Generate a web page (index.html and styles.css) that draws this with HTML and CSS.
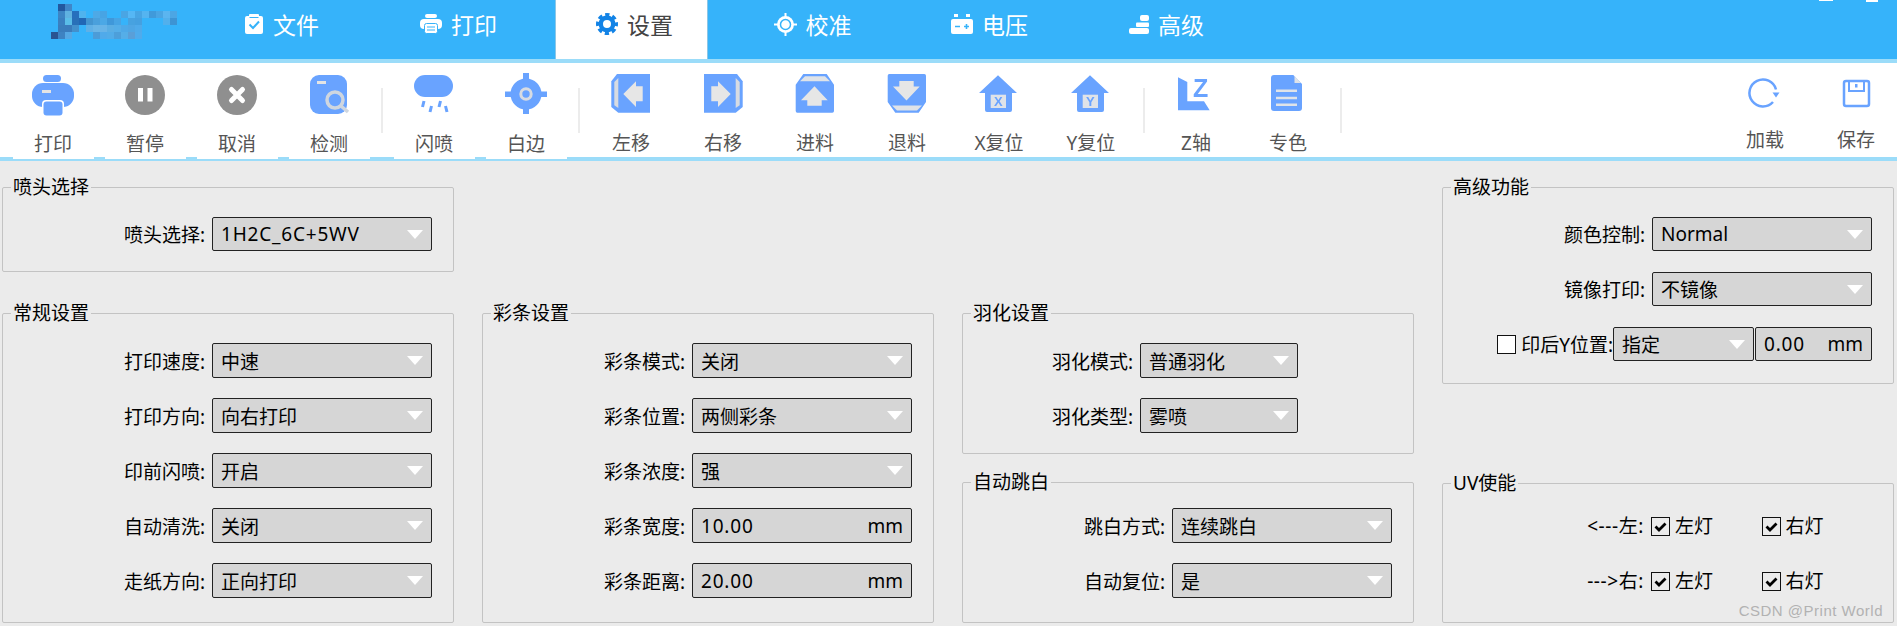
FILE: index.html
```html
<!DOCTYPE html>
<html lang="zh-CN">
<head>
<meta charset="UTF-8">
<title>打印设置</title>
<link rel="stylesheet" href="styles.css">
</head>
<body>
<div class="topbar">
    <svg class="logo" width="147" height="39" viewBox="0 0 147 39">
        <g transform="translate(0,4)">
            <rect x="7" y="0" width="7" height="7" fill="#22589f"/><rect x="14" y="0" width="7" height="7" fill="#3f86c8"/>
            <rect x="7" y="7" width="7" height="7" fill="#3c85c4"/><rect x="14" y="7" width="7" height="7" fill="#5fb2e0"/><rect x="21" y="7" width="7" height="7" fill="#2670bd"/><rect x="28" y="7" width="7" height="7" fill="#4fb3ee"/><rect x="42" y="7" width="7" height="7" fill="#4ea9e6"/><rect x="49" y="7" width="7" height="7" fill="#47a4e4"/><rect x="70" y="7" width="7" height="7" fill="#4aa5e3"/><rect x="77" y="7" width="7" height="7" fill="#55b7f5"/><rect x="84" y="7" width="7" height="7" fill="#47a5e4"/><rect x="91" y="7" width="7" height="7" fill="#55b4f0"/><rect x="98" y="7" width="7" height="7" fill="#409ada"/><rect x="105" y="7" width="7" height="7" fill="#4aa5e3"/><rect x="112" y="7" width="7" height="7" fill="#5bb5f0"/><rect x="119" y="7" width="7" height="7" fill="#4ca6e4"/>
            <rect x="7" y="14" width="7" height="7" fill="#3a80c0"/><rect x="14" y="14" width="7" height="7" fill="#5abde8"/><rect x="21" y="14" width="7" height="7" fill="#2870b8"/><rect x="28" y="14" width="7" height="7" fill="#2167b5"/><rect x="35" y="14" width="7" height="7" fill="#4395d0"/><rect x="42" y="14" width="7" height="7" fill="#4aa0dc"/><rect x="49" y="14" width="7" height="7" fill="#4ba8e6"/><rect x="56" y="14" width="7" height="7" fill="#3f98da"/><rect x="63" y="14" width="7" height="7" fill="#47a4e4"/><rect x="77" y="14" width="7" height="7" fill="#47a2e0"/><rect x="84" y="14" width="7" height="7" fill="#45a0e0"/><rect x="112" y="14" width="7" height="7" fill="#52b0ec"/><rect x="119" y="14" width="7" height="7" fill="#3d94d4"/>
            <rect x="7" y="21" width="7" height="7" fill="#3a7dbc"/><rect x="14" y="21" width="7" height="7" fill="#3a7cbc"/><rect x="21" y="21" width="7" height="7" fill="#4390cc"/><rect x="35" y="21" width="7" height="7" fill="#60b0e6"/><rect x="42" y="21" width="7" height="7" fill="#6ab5e6"/><rect x="49" y="21" width="7" height="7" fill="#68b4e8"/><rect x="56" y="21" width="7" height="7" fill="#5aaee4"/><rect x="63" y="21" width="7" height="7" fill="#55aee8"/><rect x="70" y="21" width="7" height="7" fill="#4ea9e8"/><rect x="77" y="21" width="7" height="7" fill="#4fa6e4"/><rect x="84" y="21" width="7" height="7" fill="#4faaea"/>
            <rect x="0" y="28" width="7" height="7" fill="#2a5490"/><rect x="7" y="28" width="7" height="7" fill="#3e83c2"/><rect x="14" y="28" width="7" height="7" fill="#55a8e4"/><rect x="42" y="28" width="7" height="7" fill="#4c9cd8"/><rect x="49" y="28" width="7" height="7" fill="#50aaea"/><rect x="56" y="28" width="7" height="7" fill="#52ace8"/><rect x="63" y="28" width="7" height="7" fill="#4d9fda"/><rect x="70" y="28" width="7" height="7" fill="#55aee8"/><rect x="77" y="28" width="7" height="7" fill="#5a9fd8"/><rect x="84" y="28" width="7" height="7" fill="#4fabec"/>
        </g>
    </svg>
    <div class="tab">
        <svg width="20" height="20" viewBox="0 0 20 20"><rect x="1" y="2" width="18" height="18" rx="2" fill="#fff"/><rect x="5" y="0" width="10" height="4" rx="1" fill="#fff"/><path d="M5.500 3.500h9" stroke="#36b3fa" stroke-width="1"/><path d="M5.500 10.500l3.500 3.500 6-6.500" fill="none" stroke="#36b3fa" stroke-width="2"/></svg>
        <span>文件</span>
    </div>
    <div class="tab">
        <svg width="22" height="20" viewBox="0 0 22 20"><rect x="5" y="0" width="12" height="4" rx="2" fill="#fff"/><rect x="0" y="5" width="22" height="10" rx="4" fill="#fff"/><rect x="4.500" y="9.500" width="13" height="10" rx="2" fill="#fff" stroke="#36b3fa"/><path d="M7 13h8M7 16h8" stroke="#36b3fa"/></svg>
        <span>打印</span>
    </div>
    <div class="tab tab-active">
        <svg width="22" height="22" viewBox="0 0 22 22"><circle cx="11" cy="11" r="6.200" fill="none" stroke="#1283e6" stroke-width="4.400"/><circle cx="11" cy="11" r="9.200" fill="none" stroke="#1283e6" stroke-width="3.600" stroke-dasharray="4.200 3.030" stroke-dashoffset="2.100"/></svg>
        <span>设置</span>
    </div>
    <div class="tab">
        <svg width="23" height="23" viewBox="0 0 23 23"><circle cx="11.500" cy="11.500" r="8.500" fill="#fff"/><path d="M11.500 0v23M0 11.500h23" stroke="#fff" stroke-width="2"/><circle cx="11.500" cy="11.500" r="5" fill="#fff" stroke="#36b3fa" stroke-width="1.500"/></svg>
        <span>校准</span>
    </div>
    <div class="tab">
        <svg width="22" height="20" viewBox="0 0 22 20"><rect x="3" y="0" width="4" height="3" fill="#fff"/><rect x="15" y="0" width="4" height="3" fill="#fff"/><rect x="0" y="5" width="22" height="15" rx="2" fill="#fff"/><path d="M4 12.500h5M13 12.500h5M15.500 10v5" stroke="#36b3fa" stroke-width="1.600"/></svg>
        <span>电压</span>
    </div>
    <div class="tab">
        <svg width="20" height="19" viewBox="0 0 20 19"><rect x="11" y="0" width="9" height="6" rx="2" fill="#fff"/><rect x="7" y="7.500" width="13" height="4.500" rx="1" fill="#fff"/><rect x="0" y="13" width="20" height="6" rx="2" fill="#fff"/></svg>
        <span>高级</span>
    </div>
    <i class="win-btn win-min"></i>
    <i class="win-btn win-close"></i>
</div>

<div class="toolbar">
    <div class="tool tool-raised">
        <svg width="44" height="44" viewBox="0 0 44 44"><rect x="12" y="2" width="18" height="7" rx="3.500" fill="#69a3ff"/><rect x="1" y="10" width="42" height="24" rx="11" fill="#69a3ff"/><rect x="11" y="27" width="22" height="17" rx="4" fill="#fff"/><rect x="12.500" y="28.500" width="19" height="14" rx="3" fill="#69a3ff"/><rect x="11" y="17" width="9" height="3" fill="#e4e4e4"/></svg>
        <span>打印</span>
    </div>
    <div class="tool tool-raised">
        <svg width="44" height="44" viewBox="0 0 44 44"><circle cx="22" cy="22" r="20" fill="#8f8f8f"/><rect x="15" y="15" width="5" height="13.500" fill="#fff"/><rect x="24.500" y="15" width="5" height="13.500" fill="#fff"/></svg>
        <span>暂停</span>
    </div>
    <div class="tool tool-raised">
        <svg width="44" height="44" viewBox="0 0 44 44"><circle cx="22" cy="22" r="20" fill="#8f8f8f"/><path d="M16.500 16.500l11 11M27.500 16.500l-11 11" stroke="#fff" stroke-width="5" stroke-linecap="round"/></svg>
        <span>取消</span>
    </div>
    <div class="tool tool-raised">
        <svg width="44" height="44" viewBox="0 0 44 44"><rect x="3" y="2" width="37" height="39" rx="9" fill="#69a3ff"/><rect x="10" y="8" width="9" height="3" fill="#e4e4e4"/><circle cx="28" cy="27" r="8" fill="none" stroke="#cfd6df" stroke-width="3.500"/><path d="M34 33l7 6" stroke="#cfd6df" stroke-width="3.500"/></svg>
        <span>检测</span>
    </div>
    <i class="sep"></i>
    <div class="tool tool-raised">
        <svg width="44" height="44" viewBox="0 0 44 44"><rect x="2" y="2" width="39" height="22" rx="11" fill="#69a3ff"/><path d="M12 28l-1.500 6M19.500 33l-1.500 6M28.500 28l-1.500 6M33.500 33l1.500 6" stroke="#69a3ff" stroke-width="3" fill="none"/></svg>
        <span>闪喷</span>
    </div>
    <div class="tool tool-raised">
        <svg width="44" height="44" viewBox="0 0 44 44"><circle cx="22" cy="21" r="15.500" fill="#69a3ff"/><rect x="19" y="0" width="6" height="41" fill="#69a3ff"/><rect x="1" y="18.500" width="42" height="5.500" fill="#69a3ff"/><circle cx="22" cy="21" r="5.200" fill="none" stroke="#d7dbe2" stroke-width="3"/></svg>
        <span>白边</span>
    </div>
    <i class="sep"></i>
    <div class="tool tool-low">
        <svg width="44" height="44" viewBox="0 0 44 44"><path d="M8 1h33v38.700H9.300L2.300 34V8.300z" fill="#69a3ff"/><path d="M5.300 9l4-4v30l-4-2.700z" fill="#d7dbe2"/><path d="M14.300 21L27 8.300v5h6.700v15H27V34z" fill="#e6e6e6"/></svg>
        <span>左移</span>
    </div>
    <div class="tool tool-low">
        <svg width="44" height="44" viewBox="0 0 44 44"><g transform="translate(44,0) scale(-1,1)"><path d="M8 1h33v38.700H9.300L2.300 34V8.300z" fill="#69a3ff"/><path d="M5.300 9l4-4v30l-4-2.700z" fill="#d7dbe2"/><path d="M14.300 21L27 8.300v5h6.700v15H27V34z" fill="#e6e6e6"/></g></svg>
        <span>右移</span>
    </div>
    <div class="tool tool-low">
        <svg width="44" height="44" viewBox="0 0 44 44"><path d="M2.700 11.700L10.300 1h23.400L41 11.700V38a1.700 1.700 0 0 1-1.700 1.700h-35A1.700 1.700 0 0 1 2.700 38z" fill="#69a3ff"/><path d="M7 8.300l5-5h20l5 5z" fill="#dfe3e8"/><path d="M21.500 13.300L34.700 27.300h-6v5.400H14.300v-5.400H8z" fill="#e6e6e6"/></svg>
        <span>进料</span>
    </div>
    <div class="tool tool-low">
        <svg width="44" height="44" viewBox="0 0 44 44"><g transform="translate(0,40.700) scale(1,-1)"><path d="M2.700 11.700L10.300 1h23.400L41 11.700V38a1.700 1.700 0 0 1-1.700 1.700h-35A1.700 1.700 0 0 1 2.700 38z" fill="#69a3ff"/><path d="M7 8.300l5-5h20l5 5z" fill="#dfe3e8"/><path d="M21.500 13.300L34.700 27.300h-6v5.400H14.300v-5.400H8z" fill="#e6e6e6"/></g></svg>
        <span>退料</span>
    </div>
    <div class="tool tool-low">
        <svg width="44" height="44" viewBox="0 0 44 44"><path d="M21 2.300L40 20h-5v17a2 2 0 0 1-2 2H10a2 2 0 0 1-2-2V20H2z" fill="#69a3ff"/><rect x="13.700" y="21.700" width="15.300" height="13.300" fill="#dfe3e8"/><text x="21.300" y="33" class="key">X</text></svg>
        <span>X复位</span>
    </div>
    <div class="tool tool-low">
        <svg width="44" height="44" viewBox="0 0 44 44"><path d="M21 2.300L40 20h-5v17a2 2 0 0 1-2 2H10a2 2 0 0 1-2-2V20H2z" fill="#69a3ff"/><rect x="13.700" y="21.700" width="15.300" height="13.300" fill="#dfe3e8"/><text x="21.300" y="33" class="key">Y</text></svg>
        <span>Y复位</span>
    </div>
    <i class="sep"></i>
    <div class="tool tool-low">
        <svg width="44" height="44" viewBox="0 0 44 44"><path d="M4 4.300L13.300 9v19.300H30l5.700 9H4z" fill="#69a3ff"/><text x="19" y="24" class="axis">Z</text></svg>
        <span>Z轴</span>
    </div>
    <div class="tool tool-low">
        <svg width="44" height="44" viewBox="0 0 44 44"><path d="M8 2h19.300L36 11v24a3 3 0 0 1-3 3H8a3 3 0 0 1-3-3V5a3 3 0 0 1 3-3z" fill="#69a3ff"/><path d="M28.500 3l6.500 7h-6.500z" fill="#dfe3e8"/><path d="M10 17.700h21M10 25h21M10 31.700h21" stroke="#dfe3e8" stroke-width="2.500"/></svg>
        <span>专色</span>
    </div>
    <i class="sep"></i>
    <div class="toolbar-right">
        <div class="tool tool-side">
            <svg width="44" height="44" viewBox="0 0 44 44"><path d="M30 29A13.500 13.500 0 1 1 33 16.500" fill="none" stroke="#69a3ff" stroke-width="2.500"/><path d="M29.500 19.500h7l-3.500 5z" fill="#69a3ff"/></svg>
            <span>加载</span>
        </div>
        <div class="tool tool-side">
            <svg width="44" height="44" viewBox="0 0 44 44"><rect x="10" y="8" width="25" height="25" rx="2" fill="none" stroke="#69a3ff" stroke-width="2.500"/><path d="M15 8v10h15V8" fill="none" stroke="#69a3ff" stroke-width="2"/><rect x="21" y="11" width="2.500" height="3.500" fill="#69a3ff"/></svg>
            <span>保存</span>
        </div>
    </div>
</div>

<div class="content">
    <div class="column">
        <div class="panel panel-head">
            <div class="legend">喷头选择</div>
            <div class="row"><label>喷头选择:</label><div class="select"><span class="spaced">1H2C_6C+5WV</span></div></div>
        </div>
        <div class="panel panel-full">
            <div class="legend">常规设置</div>
            <div class="row"><label>打印速度:</label><div class="select">中速</div></div>
            <div class="row"><label>打印方向:</label><div class="select">向右打印</div></div>
            <div class="row"><label>印前闪喷:</label><div class="select">开启</div></div>
            <div class="row"><label>自动清洗:</label><div class="select">关闭</div></div>
            <div class="row"><label>走纸方向:</label><div class="select">正向打印</div></div>
        </div>
    </div>
    <div class="column">
        <div class="panel panel-full">
            <div class="legend">彩条设置</div>
            <div class="row"><label>彩条模式:</label><div class="select">关闭</div></div>
            <div class="row"><label>彩条位置:</label><div class="select">两侧彩条</div></div>
            <div class="row"><label>彩条浓度:</label><div class="select">强</div></div>
            <div class="row"><label>彩条宽度:</label><div class="input"><span class="spaced">10.00</span><span>mm</span></div></div>
            <div class="row"><label>彩条距离:</label><div class="input"><span class="spaced">20.00</span><span>mm</span></div></div>
        </div>
    </div>
    <div class="column">
        <div class="panel panel-feather">
            <div class="legend">羽化设置</div>
            <div class="row"><label>羽化模式:</label><div class="select select-short">普通羽化</div></div>
            <div class="row"><label>羽化类型:</label><div class="select select-short">雾喷</div></div>
        </div>
        <div class="panel panel-skip">
            <div class="legend">自动跳白</div>
            <div class="row"><label>跳白方式:</label><div class="select">连续跳白</div></div>
            <div class="row"><label>自动复位:</label><div class="select">是</div></div>
        </div>
    </div>
    <div class="column">
        <div class="panel panel-adv">
            <div class="legend">高级功能</div>
            <div class="row"><label>颜色控制:</label><div class="select">Normal</div></div>
            <div class="row"><label>镜像打印:</label><div class="select">不镜像</div></div>
            <div class="row row-joined">
                <i class="check"></i><label>印后Y位置:</label>
                <div class="select select-mid">指定</div>
                <div class="input input-mid"><span class="spaced">0.00</span><span>mm</span></div>
            </div>
        </div>
        <div class="panel panel-uv">
            <div class="legend">UV使能</div>
            <div class="uv-row">
                <label>&lt;---左:</label>
                <div class="uv-item"><i class="check check-on"><svg width="17" height="17" viewBox="0 0 17 17"><path d="M3.500 8.500l3.500 3.500 6.500-6.500" fill="none" stroke="#000" stroke-width="2.800"/></svg></i><span>左灯</span></div>
                <div class="uv-item"><i class="check check-on"><svg width="17" height="17" viewBox="0 0 17 17"><path d="M3.500 8.500l3.500 3.500 6.500-6.500" fill="none" stroke="#000" stroke-width="2.800"/></svg></i><span>右灯</span></div>
            </div>
            <div class="uv-row">
                <label>---&gt;右:</label>
                <div class="uv-item"><i class="check check-on"><svg width="17" height="17" viewBox="0 0 17 17"><path d="M3.500 8.500l3.500 3.500 6.500-6.500" fill="none" stroke="#000" stroke-width="2.800"/></svg></i><span>左灯</span></div>
                <div class="uv-item"><i class="check check-on"><svg width="17" height="17" viewBox="0 0 17 17"><path d="M3.500 8.500l3.500 3.500 6.500-6.500" fill="none" stroke="#000" stroke-width="2.800"/></svg></i><span>右灯</span></div>
            </div>
            <div class="watermark">CSDN @Print World</div>
        </div>
    </div>
</div>
</body>
</html>
```

FILE: styles.css
```css
* {
    box-sizing: border-box;
}
html, body {
    margin: 0;
    height: 100%;
    overflow: hidden;
}
body {
    background-color: #ebebeb;
    color: #000;
    font-family: "Noto Sans", "Noto Sans CJK SC", sans-serif;
    font-size: 19px;
}
.topbar {
    position: relative;
    display: flex;
    height: 63px;
    padding-left: 205px;
    background-color: #36b3fa;
    border-bottom: 4px solid #9bdcf9;
}
.logo {
    position: absolute;
    left: 51px;
    top: 0;
}
.tab {
    display: flex;
    justify-content: center;
    align-items: center;
    gap: 9px;
    width: 153px;
    height: 59px;
    margin-right: 24px;
    padding-bottom: 11px;
    color: #fff;
    font-size: 23px;
}
.tab-active {
    margin-left: -4px;
    margin-right: 28px;
    padding-left: 6px;
    background-color: #fff;
    color: #444;
    border-left: 1px solid #8cc6e6;
    border-right: 1px solid #8cc6e6;
}
.win-btn {
    position: absolute;
    top: 0;
    height: 2px;
    background-color: #fff;
}
.win-min {
    left: 1819px;
    width: 14px;
    height: 1px;
}
.win-close {
    left: 1866px;
    width: 12px;
}

.toolbar {
    display: flex;
    align-items: flex-start;
    height: 98px;
    padding-left: 7px;
    background-color: #fff;
    border-bottom: 4px solid #9bdcf9;
}
.tool {
    position: relative;
    display: flex;
    flex-direction: column;
    align-items: center;
    width: 92px;
    height: 94px;
    padding-top: 10px;
    color: #555;
    font-size: 19px;
    line-height: 24px;
}
.tool svg {
    flex: none;
    filter: blur(0.5px);
}
.tool span {
    margin-top: 15px;
}
.tool-raised::after {
    content: "";
    position: absolute;
    left: 6px;
    bottom: -2px;
    width: 81px;
    height: 2px;
    background-color: #fff;
}
.tool-low span {
    margin-top: 14px;
}
.tool-side {
    width: 82px;
}
.tool-side span {
    margin-top: 11px;
}
.sep {
    flex: none;
    width: 2px;
    height: 45px;
    margin: 25px 5px 0 6px;
    background-color: #ececec;
}
.toolbar-right {
    display: flex;
    gap: 9px;
    margin-left: auto;
}
.key {
    fill: #69a3ff;
    font-family: "Liberation Sans", sans-serif;
    font-size: 13px;
    font-weight: bold;
    text-anchor: middle;
}
.axis {
    fill: #69a3ff;
    font-family: "Liberation Sans", sans-serif;
    font-size: 25px;
    font-weight: bold;
}

.content {
    display: grid;
    grid-template-columns: repeat(4, 452px);
    gap: 28px;
    height: 465px;
    padding: 0 0 3px 2px;
}
.column {
    display: flex;
    flex-direction: column;
    justify-content: flex-end;
    gap: 41px;
}
.column:nth-child(3) {
    gap: 28px;
}
.column:nth-child(4) {
    gap: 99px;
}
.panel {
    position: relative;
    border: 1px solid #c3c3c3;
    border-radius: 2px;
    padding: 0 21px 0 0;
}
.legend {
    width: fit-content;
    height: 24px;
    margin: -13px 0 0 8px;
    padding: 0 2px;
    line-height: 24px;
    background-color: #ebebeb;
}
.row {
    display: flex;
    justify-content: flex-end;
    align-items: center;
    gap: 7px;
    margin-top: 20px;
    white-space: nowrap;
}
.panel .row:nth-child(2) {
    margin-top: 18px;
}
.panel-full {
    padding-bottom: 24px;
}
.panel-skip {
    padding-bottom: 24px;
}
.panel .panel-skip-first, .panel-skip .row:nth-child(2) {
    margin-top: 14px;
}
.panel-feather {
    padding-right: 115px;
    padding-bottom: 20px;
}
.panel-head {
    height: 85px;
}
.panel-adv {
    height: 197px;
}
.panel-head .select, .panel-adv .select, .panel-adv .input {
    height: 34px;
}
.panel-adv .row {
    margin-top: 21px;
}
.panel-adv .row:nth-child(2) {
    margin-top: 18px;
}
.select, .input {
    display: flex;
    justify-content: space-between;
    align-items: center;
    width: 220px;
    height: 35px;
    padding: 0 8px;
    background-color: #d6d6d6;
    border: 1px solid #222;
    border-radius: 2px;
}
.select::after {
    content: "";
    width: 0;
    height: 0;
    border-left: 8.5px solid transparent;
    border-right: 8.5px solid transparent;
    border-top: 9px solid #fff;
}
.spaced {
    letter-spacing: 0.8px;
}
.select-short {
    width: 158px;
}
.select-mid {
    width: 141px;
}
.input-mid {
    width: 117px;
}
.row-joined {
    gap: 0;
}
.row-joined label {
    margin: 0 0 0 5px;
}
.row-joined .input {
    margin-left: 1px;
}
.check {
    display: flex;
    flex: none;
    justify-content: center;
    align-items: center;
    width: 19px;
    height: 19px;
    background-color: #fff;
    border: 1.5px solid #111;
}
.check-on {
    background-color: transparent;
}
.panel-uv {
    height: 140px;
}
.uv-row {
    display: flex;
    align-items: center;
    height: 19px;
    margin-top: 36px;
    line-height: 19px;
}
.uv-row:nth-child(2) {
    margin-top: 22px;
}
.uv-row label {
    width: 202px;
    margin-right: 7px;
    text-align: right;
    letter-spacing: 0.6px;
}
.uv-item {
    display: flex;
    align-items: center;
    gap: 5px;
    width: 111px;
}
.watermark {
    position: absolute;
    right: 10px;
    bottom: 3px;
    color: #b2b2b2;
    font-family: "Liberation Sans", sans-serif;
    font-size: 15px;
    letter-spacing: 0.5px;
}
```
